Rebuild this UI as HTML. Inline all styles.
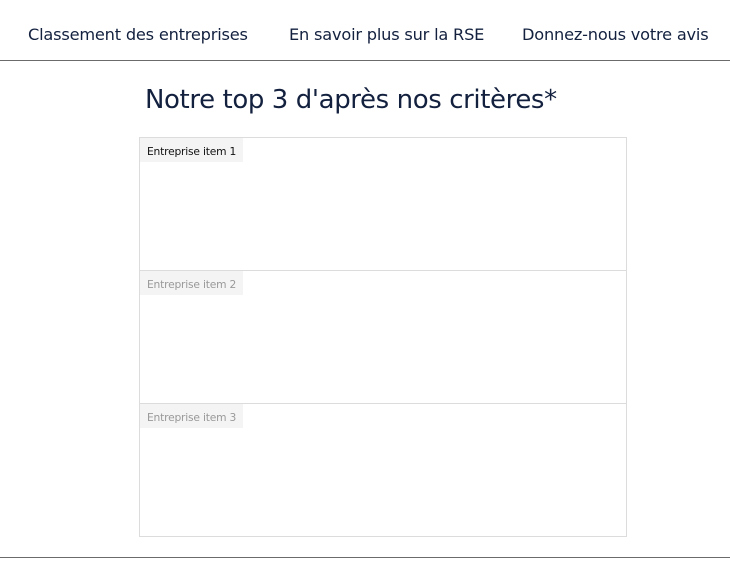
<!DOCTYPE html>
<html><head><meta charset="utf-8"><style>
*{margin:0;padding:0;box-sizing:border-box}
body{width:730px;height:572px;background:#fff;font-family:"DejaVu Sans","Liberation Sans",sans-serif;color:#13213f;position:relative;overflow:hidden}
.nav{position:absolute;top:0;left:0;width:730px;height:61px;border-bottom:1px solid #6b6b6b}
.nav span{position:absolute;top:25px;font-size:16.2px;letter-spacing:-0.2px;white-space:nowrap}
h1{position:absolute;left:145px;top:85px;font-weight:normal;font-size:26px;letter-spacing:-0.4px;white-space:nowrap}
.box{position:absolute;left:139px;top:137px;width:488px;height:400px;border:1px solid #dcdcdc}
.row{position:absolute;left:0;width:486px;height:133px;border-bottom:1px solid #dcdcdc}
.lab{position:absolute;left:0;top:0;width:103px;height:24px;background:#f4f4f4;font-size:10.7px;padding:7px 0 0 7px;white-space:nowrap;letter-spacing:-0.2px}
.bot{position:absolute;left:0;top:557px;width:730px;border-top:1px solid #6b6b6b}
</style></head><body>
<div class="nav">
<span style="left:28px">Classement des entreprises</span>
<span style="left:289px">En savoir plus sur la RSE</span>
<span style="left:522px">Donnez-nous votre avis</span>
</div>
<h1>Notre top 3 d'après nos critères*</h1>
<div class="box">
<div class="row" style="top:0"><div class="lab" style="color:#111">Entreprise item 1</div></div>
<div class="row" style="top:133px"><div class="lab" style="color:#999">Entreprise item 2</div></div>
<div class="row" style="top:266px;border-bottom:none"><div class="lab" style="color:#999">Entreprise item 3</div></div>
</div>
<div class="bot"></div>
</body></html>
